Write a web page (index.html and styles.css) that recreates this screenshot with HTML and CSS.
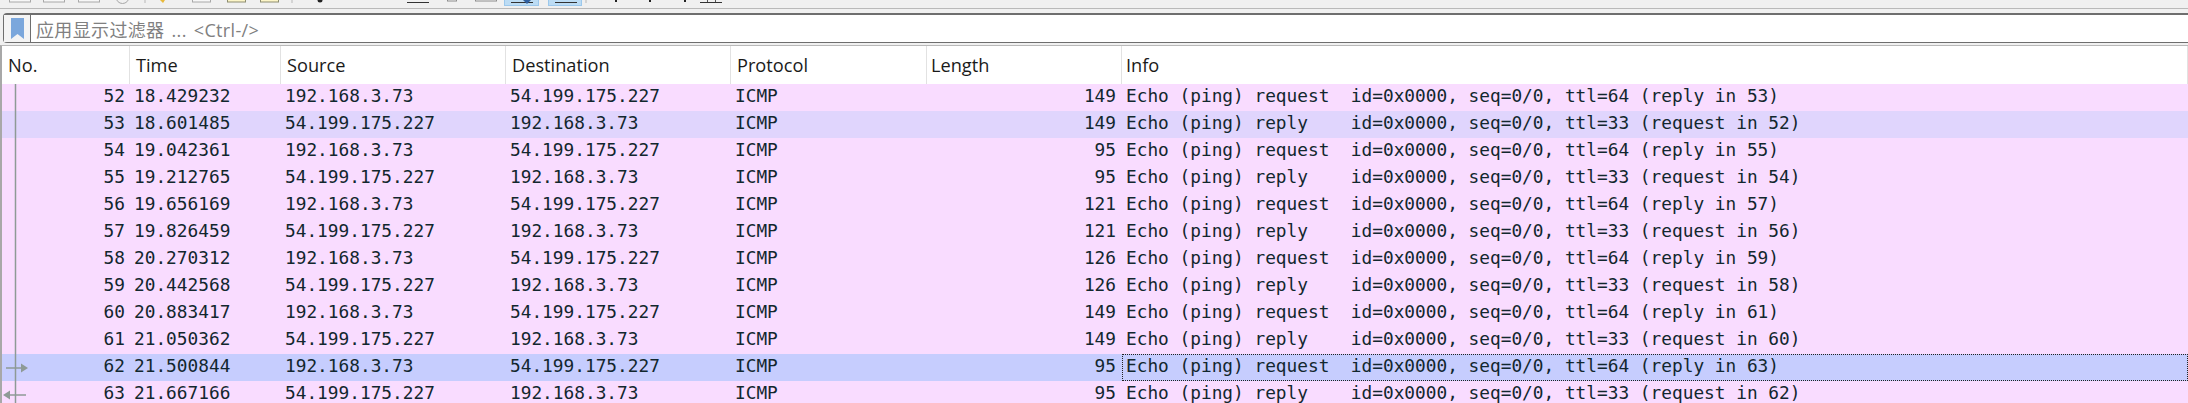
FILE: index.html
```html
<!DOCTYPE html>
<html lang="zh">
<head>
<meta charset="utf-8">
<title>Wireshark</title>
<link rel="stylesheet" href="styles.css">
</head>
<body>
<div class="toolbar">
  <svg class="strip" width="760" height="8" viewBox="0 0 760 8">
    <g fill="#f7f7f7" stroke="#a8a8a8">
      <rect x="9.5" y="-6" width="21" height="8"/><rect x="43.5" y="-6" width="21" height="8"/><rect x="78.5" y="-6" width="21" height="8"/>
      <circle cx="122.500" cy="-3" r="6.500" fill="none"/>
      <rect x="192.500" y="-6" width="18" height="8"/>
    </g>
    <g fill="#fdf6c8" stroke="#8d8d70">
      <rect x="227.500" y="-6" width="18" height="8"/><rect x="260.500" y="-6" width="18" height="8"/>
    </g>
    <g fill="#d4d4d4">
      <rect x="144" y="0" width="2" height="3"/><rect x="291" y="0" width="2" height="3"/><rect x="585" y="0" width="2" height="3"/>
    </g>
    <path d="M160 0H165L163 3Z" fill="#e8b93c"/>
    <circle cx="320" cy="0" r="2.500" fill="#222"/>
    <path d="M407 2.500H429M511 2.500H533M555 2.500H577M700 2.500H722" stroke="#333"/>
    <rect x="447.500" y="-6" width="9" height="7" fill="#f7f7f7" stroke="#8c8c8c"/>
    <rect x="475.500" y="-6" width="21" height="7" fill="#f7f7f7" stroke="#8c8c8c"/>
    <rect x="504.500" y="-2" width="34" height="7.500" fill="#bcdcf4" stroke="#9cc8ec"/>
    <rect x="548.500" y="-2" width="33" height="7.500" fill="#bcdcf4" stroke="#9cc8ec"/>
    <path d="M511 2.500H533M555 2.500H577" stroke="#333"/>
    <path d="M523 0H531L527 4Z" fill="#2f5f9e"/>
    <path d="M616 0V2M650 0V2M685 0V2" stroke="#222" stroke-width="2"/>
    <path d="M707.500 0V2M715.500 0V2" stroke="#555"/>
  </svg>
</div>
<div class="filter">
  <span class="bookmark"><svg width="13" height="21" viewBox="0 0 13 21"><path d="M0 0H13V21L6.500 16L0 21Z" fill="#7ba7dc"/></svg></span>
  <span class="filter-text">应用显示过滤器 ... &lt;Ctrl-/&gt;</span>
</div>
<div class="list">
  <div class="row head"><span class="c no">No.</span><span class="c time">Time</span><span class="c src">Source</span><span class="c dst">Destination</span><span class="c proto">Protocol</span><span class="c len">Length</span><span class="c info">Info</span></div>
  <div class="row req"><span class="c no">52</span><span class="c time">18.429232</span><span class="c src">192.168.3.73</span><span class="c dst">54.199.175.227</span><span class="c proto">ICMP</span><span class="c len">149</span><span class="c info">Echo (ping) request  id=0x0000, seq=0/0, ttl=64 (reply in 53)</span></div>
  <div class="row alt"><span class="c no">53</span><span class="c time">18.601485</span><span class="c src">54.199.175.227</span><span class="c dst">192.168.3.73</span><span class="c proto">ICMP</span><span class="c len">149</span><span class="c info">Echo (ping) reply    id=0x0000, seq=0/0, ttl=33 (request in 52)</span></div>
  <div class="row req"><span class="c no">54</span><span class="c time">19.042361</span><span class="c src">192.168.3.73</span><span class="c dst">54.199.175.227</span><span class="c proto">ICMP</span><span class="c len">95</span><span class="c info">Echo (ping) request  id=0x0000, seq=0/0, ttl=64 (reply in 55)</span></div>
  <div class="row req"><span class="c no">55</span><span class="c time">19.212765</span><span class="c src">54.199.175.227</span><span class="c dst">192.168.3.73</span><span class="c proto">ICMP</span><span class="c len">95</span><span class="c info">Echo (ping) reply    id=0x0000, seq=0/0, ttl=33 (request in 54)</span></div>
  <div class="row req"><span class="c no">56</span><span class="c time">19.656169</span><span class="c src">192.168.3.73</span><span class="c dst">54.199.175.227</span><span class="c proto">ICMP</span><span class="c len">121</span><span class="c info">Echo (ping) request  id=0x0000, seq=0/0, ttl=64 (reply in 57)</span></div>
  <div class="row req"><span class="c no">57</span><span class="c time">19.826459</span><span class="c src">54.199.175.227</span><span class="c dst">192.168.3.73</span><span class="c proto">ICMP</span><span class="c len">121</span><span class="c info">Echo (ping) reply    id=0x0000, seq=0/0, ttl=33 (request in 56)</span></div>
  <div class="row req"><span class="c no">58</span><span class="c time">20.270312</span><span class="c src">192.168.3.73</span><span class="c dst">54.199.175.227</span><span class="c proto">ICMP</span><span class="c len">126</span><span class="c info">Echo (ping) request  id=0x0000, seq=0/0, ttl=64 (reply in 59)</span></div>
  <div class="row req"><span class="c no">59</span><span class="c time">20.442568</span><span class="c src">54.199.175.227</span><span class="c dst">192.168.3.73</span><span class="c proto">ICMP</span><span class="c len">126</span><span class="c info">Echo (ping) reply    id=0x0000, seq=0/0, ttl=33 (request in 58)</span></div>
  <div class="row req"><span class="c no">60</span><span class="c time">20.883417</span><span class="c src">192.168.3.73</span><span class="c dst">54.199.175.227</span><span class="c proto">ICMP</span><span class="c len">149</span><span class="c info">Echo (ping) request  id=0x0000, seq=0/0, ttl=64 (reply in 61)</span></div>
  <div class="row req"><span class="c no">61</span><span class="c time">21.050362</span><span class="c src">54.199.175.227</span><span class="c dst">192.168.3.73</span><span class="c proto">ICMP</span><span class="c len">149</span><span class="c info">Echo (ping) reply    id=0x0000, seq=0/0, ttl=33 (request in 60)</span></div>
  <div class="row sel"><span class="c no">62</span><span class="c time">21.500844</span><span class="c src">192.168.3.73</span><span class="c dst">54.199.175.227</span><span class="c proto">ICMP</span><span class="c len">95</span><span class="c info">Echo (ping) request  id=0x0000, seq=0/0, ttl=64 (reply in 63)</span></div>
  <div class="row req"><span class="c no">63</span><span class="c time">21.667166</span><span class="c src">54.199.175.227</span><span class="c dst">192.168.3.73</span><span class="c proto">ICMP</span><span class="c len">95</span><span class="c info">Echo (ping) reply    id=0x0000, seq=0/0, ttl=33 (request in 62)</span></div>
  <svg class="flow" width="30" height="320" viewBox="0 0 30 320">
    <path d="M13.500 0V320" stroke="#8e9a96" stroke-width="1.500" fill="none"/>
    <path d="M4 284H22" stroke="#8e9a96" stroke-width="1.500" fill="none"/><path d="M19 279.500L26 284L19 288.500Z" fill="#8e9a96"/>
    <path d="M4 311H24" stroke="#8e9a96" stroke-width="1.500" fill="none"/><path d="M8 306.500L1 311L8 315.500Z" fill="#8e9a96"/>
  </svg>
</div>
</body>
</html>
```
FILE: styles.css
```css
html, body { margin: 0; padding: 0; width: 2188px; height: 403px; overflow: hidden; background: #f0f0f0; }
.toolbar { height: 8px; background: #f0f0f0; border-bottom: 1px solid #b9b9b9; }
.strip { display: block; }
.filter { display: flex; align-items: center; height: 27px; margin: 4px 0 0 3px; border: solid #6e6e6e; border-width: 2px 0 1px 1px; border-radius: 4px 0 0 4px; background: #fff; }
.bookmark { display: flex; align-items: center; justify-content: center; width: 27px; height: 27px; border-right: 1px solid #6e6e6e; background: #f4f4f4; box-sizing: border-box; flex: none; }
.filter-text { margin-left: 5px; font: 18px "Open Sans", "Noto Sans CJK SC", sans-serif; color: #808080; word-spacing: 2px; letter-spacing: 0.35px; }
.list { position: relative; margin-top: 2px; border-top: 1px solid #b9b9b9; border-left: 2px solid #a8a8a8; background: #fff; height: 357px; }
.row { display: grid; grid-template-columns: 128px 151px 225px 225px 196px 195px 1fr; height: 27px; align-items: center; font: 17.8px "DejaVu Sans Mono", monospace; color: #12272e; white-space: pre; background: #f9dcff; }
.row.head { height: 38px; background: #fff; font: 18.2px "Open Sans", sans-serif; color: #1a1a1a; }
.row.head .c { height: 38px; line-height: 38px; border-right: 1px solid #e2e2e2; box-sizing: border-box; }
.row.head .c.no { text-align: left; padding-left: 6px; padding-right: 0; }
.row.head .c.len { text-align: left; padding: 0 0 0 4px; }
.row.head .c.info { padding-left: 4px; }
.row.head .c.time, .row.head .c.src, .row.head .c.dst, .row.head .c.proto { padding-left: 6px; }
.row.alt { background: #e0d5fd; }
.row.sel { background: #c6cdfe; }
.row.sel .info { outline: 1px dotted #222; outline-offset: -1px; }
.c { overflow: hidden; padding-left: 4px; box-sizing: border-box; line-height: 24px; height: 27px; }
.no { text-align: right; padding-right: 5px; }
.len { text-align: right; padding-right: 6px; }
.flow { position: absolute; left: 0; top: 38px; pointer-events: none; }
```
